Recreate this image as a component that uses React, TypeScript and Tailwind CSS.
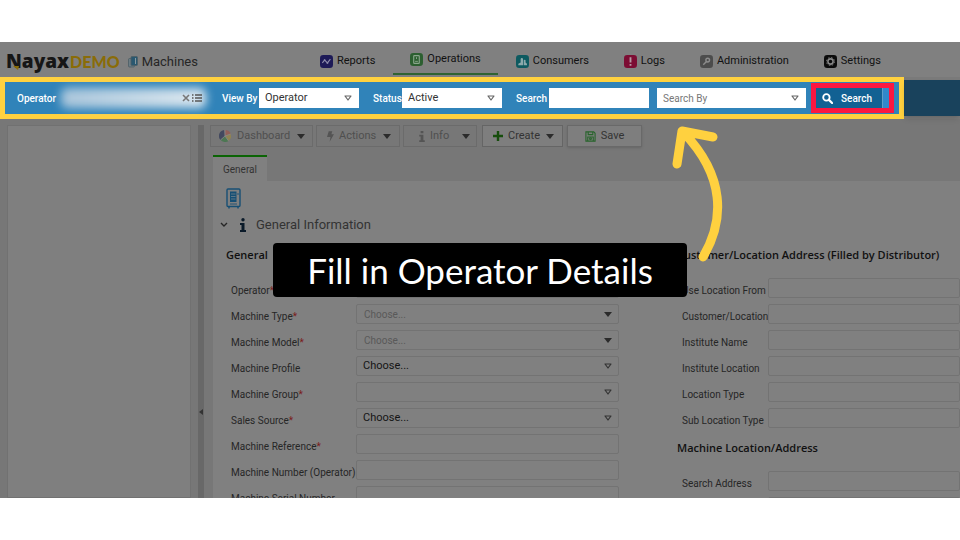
import React from 'react';

interface NavItem {
  label: string;
  icon: React.ReactNode;
  active?: boolean;
}

interface Field {
  id: string;
  label: string;
  required?: boolean;
  kind: 'text' | 'select';
  value?: string;
  disabled?: boolean;
}

const navItems: NavItem[] = [
  {
    label: 'Reports',
    icon: (
      <svg viewBox="0 0 14 14" className="size-[13px]">
        <rect width="14" height="14" rx="3.5" fill="#1d1a57" />
        <path d="M2.5 8.5 5 5.5l3 3 3.200-4" fill="none" stroke="#8d8cab" strokeWidth="1.2" />
        <circle cx="5" cy="5.500" r="1" fill="#8d8cab" />
        <circle cx="8" cy="8.500" r="1" fill="#8d8cab" />
      </svg>
    ),
  },
  {
    label: 'Operations',
    active: true,
    icon: (
      <svg viewBox="0 0 14 14" className="size-[13px]">
        <rect width="14" height="14" rx="3.5" fill="#2c5f30" />
        <rect x="4" y="2.8" width="6" height="8.400" rx="0.800" fill="none" stroke="#8aa68c" strokeWidth="1.2" />
        <path d="M5.500 9h3M7 4.500v2" stroke="#8aa68c" strokeWidth="1" />
      </svg>
    ),
  },
  {
    label: 'Consumers',
    icon: (
      <svg viewBox="0 0 14 14" className="size-[13px]">
        <rect width="14" height="14" rx="3.5" fill="#0d5a60" />
        <path d="M2.500 11V9.500L5 8V4.500a1.300 1.300 0 0 1 2.600 0V11z" fill="#8ba9ab" />
        <path d="M8.300 11V6a1 1 0 0 1 2 0v2l1.500 1.500V11z" fill="#8ba9ab" />
      </svg>
    ),
  },
  {
    label: 'Logs',
    icon: (
      <svg viewBox="0 0 14 14" className="size-[13px]">
        <rect width="14" height="14" rx="3.5" fill="#7c0d33" />
        <path d="M7 2.500v5.500M7 9.600v2" stroke="#b598a2" strokeWidth="2" />
      </svg>
    ),
  },
  {
    label: 'Administration',
    icon: (
      <svg viewBox="0 0 14 14" className="size-[13px]">
        <rect width="14" height="14" rx="3.5" fill="#4c4c4c" />
        <circle cx="8.300" cy="5.500" r="2" fill="none" stroke="#8c8c8c" strokeWidth="1.500" />
        <path d="M7 7 3.500 10.500" stroke="#8c8c8c" strokeWidth="1.600" />
      </svg>
    ),
  },
  {
    label: 'Settings',
    icon: (
      <svg viewBox="0 0 14 14" className="size-[13px]">
        <rect width="14" height="14" rx="3.5" fill="#0b0b0b" />
        <circle cx="7" cy="7" r="2.800" fill="none" stroke="#858585" strokeWidth="1.700" />
        <circle cx="7" cy="7" r="4.300" fill="none" stroke="#858585" strokeWidth="1" strokeDasharray="1.700 1.677" />
      </svg>
    ),
  },
];

const machineFields: Field[] = [
  { id: 'operator', label: 'Operator', required: true, kind: 'text' },
  { id: 'machine-type', label: 'Machine Type', required: true, kind: 'select', value: 'Choose...', disabled: true },
  { id: 'machine-model', label: 'Machine Model', required: true, kind: 'select', value: 'Choose...', disabled: true },
  { id: 'machine-profile', label: 'Machine Profile', kind: 'select', value: 'Choose...' },
  { id: 'machine-group', label: 'Machine Group', required: true, kind: 'select', value: '' },
  { id: 'sales-source', label: 'Sales Source', required: true, kind: 'select', value: 'Choose...' },
  { id: 'machine-reference', label: 'Machine Reference', required: true, kind: 'text' },
  { id: 'machine-number', label: 'Machine Number (Operator)', kind: 'text' },
  { id: 'machine-serial', label: 'Machine Serial Number', kind: 'text' },
];

const customerFields: Field[] = [
  { id: 'use-location', label: 'Use Location From', kind: 'text' },
  { id: 'customer-location', label: 'Customer/Location', kind: 'text' },
  { id: 'institute-name', label: 'Institute Name', kind: 'text' },
  { id: 'institute-location', label: 'Institute Location', kind: 'text' },
  { id: 'location-type', label: 'Location Type', kind: 'text' },
  { id: 'sub-location-type', label: 'Sub Location Type', kind: 'text' },
];

const addressFields: Field[] = [
  { id: 'search-address', label: 'Search Address', kind: 'text' },
  { id: 'country', label: '', kind: 'text' },
];

const SolidCaret: React.FC = () => (
  <svg viewBox="0 0 8 5" className="h-[5px] w-2 shrink-0">
    <path d="M0 0h8L4 5z" fill="#2b2b2b" />
  </svg>
);

const OpenCaret: React.FC = () => (
  <svg viewBox="0 0 8 6" className="h-[6px] w-2 shrink-0">
    <path d="M1 1h6L4 5z" fill="none" stroke="currentColor" strokeWidth="1.200" strokeLinejoin="round" />
  </svg>
);

const FieldRow: React.FC<{ field: Field }> = ({ field }) => (
  <>
    <label htmlFor={field.id} className="pt-[6px] pl-[5px] leading-[14px] whitespace-nowrap text-[#262626]">
      {field.label}
      {field.required && <span className="text-[#7a1c1c]">*</span>}
    </label>
    {field.kind === 'text' ? (
      <input id={field.id} className="h-5 w-full rounded-xs border border-[#737373] bg-transparent px-2" />
    ) : (
      <div className="relative h-5">
        <select
          id={field.id}
          disabled={field.disabled}
          className={`h-5 w-full appearance-none rounded-xs border border-[#737373] bg-transparent opacity-100 ${
            field.disabled ? 'px-[7px] text-[#595959]' : 'px-[6px] text-[11px] text-[#151515]'
          }`}
        >
          <option>{field.value}</option>
        </select>
        <span className="pointer-events-none absolute inset-y-0 right-[7px] flex items-center text-[#333333]">
          {field.disabled ? <SolidCaret /> : <OpenCaret />}
        </span>
      </div>
    )}
  </>
);

const SectionTitle: React.FC<{ children: React.ReactNode }> = ({ children }) => (
  <h3 className="mt-[10px] mb-[13px] font-['Open_Sans'] text-[11px] leading-5 font-semibold whitespace-nowrap text-[#111111]">
    {children}
  </h3>
);

const FilterSelect: React.FC<{ id: string; value: string; className: string }> = ({ id, value, className }) => (
  <div className={`relative h-5 bg-white ${className}`}>
    <select id={id} className="h-5 w-full appearance-none px-[6px]">
      <option>{value}</option>
    </select>
    <span className="pointer-events-none absolute inset-y-0 right-[7px] flex items-center text-[#666666]">
      <OpenCaret />
    </span>
  </div>
);

const Header: React.FC = () => (
  <header className="flex h-[35px] items-stretch bg-[#808080] text-[11px] text-[#111111]">
    <div className="flex w-[303px] shrink-0 items-center pt-1 pl-[6px]">
      <div className="relative flex items-baseline">
        <span className="font-['Open_Sans'] text-[19px] leading-5 font-extrabold text-[#161616]">Nayax</span>
        <span className="ml-px font-[Lato] text-[16px] leading-5 font-black text-[#8a6c08]">DEMO</span>
        <svg viewBox="0 0 6 4" className="absolute bottom-[2px] left-[7px] h-1 w-[6px]">
          <path d="M0 0h6L5 4z" fill="#8a6c08" />
        </svg>
      </div>
      <svg viewBox="0 0 10 12" className="mr-1 ml-2 h-3 w-[10px]">
        <rect x="0.500" y="2.500" width="6" height="8.500" rx="1" fill="#6c7c83" stroke="#465962" strokeWidth="0.700" />
        <rect x="3" y="0.500" width="6.500" height="9" rx="1" fill="#2a5870" stroke="#4e5e65" strokeWidth="0.800" />
        <path d="M7.500 2v6" stroke="#8899a0" strokeWidth="1" />
      </svg>
      <h1 className="text-[13px] text-[#262626]">Machines</h1>
    </div>
    <nav className="flex gap-px">
      {navItems.map((item) => (
        <a
          key={item.label}
          href="#"
          className={`flex items-center gap-1 px-[17px] ${
            item.active ? 'mb-[2px] border-b-2 border-[#2f6332] pt-[3px]' : 'pt-1'
          }`}
        >
          {item.icon}
          {item.label}
        </a>
      ))}
    </nav>
  </header>
);

const FilterBar: React.FC = () => (
  <div className="flex items-center bg-[#7a7a7a]">
    <form className="flex h-[42px] shrink-0 items-center border-[5px] border-[#ffd13f] bg-[#3083b9] pl-3 text-[11px] text-[#333333]">
      <label htmlFor="filter-operator" className="w-10 text-[10px] font-medium text-white">Operator</label>
      <div className="relative mr-3 flex h-5 w-[153px] items-center justify-end gap-[2px] pr-2">
        <div className="absolute inset-x-1 inset-y-0 rounded-md bg-linear-to-r from-[#aac6db] to-[#dde8f0] blur-[5px]" />
        <input id="filter-operator" className="relative h-5 w-full min-w-0 bg-transparent" />
        <svg viewBox="0 0 8 8" className="relative size-2 shrink-0">
          <path d="M1 1l6 6M7 1 1 7" stroke="#777777" strokeWidth="1.600" />
        </svg>
        <svg viewBox="0 0 10 8" className="relative h-2 w-[10px] shrink-0">
          <path d="M3 1h7M3 4h7M3 7h7M0 1h1.500M0 4h1.500M0 7h1.500" stroke="#555555" strokeWidth="1.300" />
        </svg>
      </div>
      <label htmlFor="filter-view" className="w-[37px] text-[10px] font-medium whitespace-nowrap text-white">View By</label>
      <FilterSelect id="filter-view" value="Operator" className="w-[100px]" />
      <label htmlFor="filter-status" className="ml-[14px] w-[29px] text-[10px] font-medium text-white">Status</label>
      <FilterSelect id="filter-status" value="Active" className="w-[100px]" />
      <label htmlFor="filter-search" className="ml-[14px] w-[33px] text-[10px] font-medium text-white">Search</label>
      <input id="filter-search" className="h-5 w-[100px] bg-white px-[6px]" />
      <FilterSelect id="filter-search-by" value="Search By" className="ml-2 w-[149px] text-[10px] text-[#777777]" />
      <div className="mr-[5px] ml-[5px] flex h-[30px] border-[5px] border-[#fb1741] bg-[#3088cb]">
        <button type="button" className="mr-[6px] flex w-[67px] items-center gap-2 border-r border-[#5d9fc9] bg-[#126193] pl-[6px] text-[10px] font-medium text-white">
          <svg viewBox="0 0 12 12" className="size-[11px]">
            <circle cx="4.800" cy="4.800" r="3.500" fill="none" stroke="white" strokeWidth="2" />
            <path d="M7.500 7.500 11 11" stroke="white" strokeWidth="2.400" strokeLinecap="round" />
          </svg>
          Search
        </button>
      </div>
    </form>
    <div className="h-9 flex-1 bg-[#19425c] shadow-md" />
  </div>
);

const Toolbar: React.FC = () => (
  <div className="flex h-[22px] text-[11px] text-[#4f4f4f]">
    <button type="button" className="mr-[3px] flex w-[103px] items-center border border-[#6b6b6b] pr-[7px] pl-2">
      <svg viewBox="0 0 12 12" className="mr-[6px] size-3">
        <path d="M6 6V0a6 6 0 0 1 5.700 4z" fill="#925f58" />
        <path d="M6 6l5.700-2A6 6 0 0 1 9.500 10.900z" fill="#8f8352" />
        <path d="M6 6l3.500 4.900A6 6 0 0 1 1.500 10z" fill="#4d7753" />
        <path d="M6 6l-4.500 4A6 6 0 0 1 5.200 0z" fill="#43495f" />
        <path d="M6 6V0M6 6l5.700-2M6 6l3.500 4.900M6 6l-4.500 4" stroke="#888888" strokeWidth="0.800" />
      </svg>
      <span className="mr-auto">Dashboard</span>
      <SolidCaret />
    </button>
    <button type="button" className="mr-[3px] flex w-[84px] items-center border border-[#6b6b6b] pr-2 pl-[10px]">
      <svg viewBox="0 0 8 12" className="mr-[5px] h-[11px] w-[7px]">
        <path d="M2 0h4L5 3.500h3L3 12l1-5.500H0z" fill="#545454" />
      </svg>
      <span className="mr-auto">Actions</span>
      <SolidCaret />
    </button>
    <button type="button" className="mr-[5px] flex w-[74px] items-center border border-[#6b6b6b] pr-[6px] pl-[15px]">
      <svg viewBox="0 0 6 12" className="mr-[5px] h-[11px] w-[6px]">
        <path d="M1.500 0h3v2.500h-3zM0 4h4.500v6H6v2H0v-2h1.500V6H0z" fill="#545454" />
      </svg>
      <span className="mr-auto">Info</span>
      <SolidCaret />
    </button>
    <button type="button" className="mr-1 flex w-[81px] items-center border border-[#656565] bg-[#7e7e7e] pr-2 pl-[10px] text-[#333333]">
      <svg viewBox="0 0 10 10" className="mr-[5px] size-[10px]">
        <path d="M5 0v10M0 5h10" stroke="#164d0c" strokeWidth="2.400" />
      </svg>
      <span className="mr-auto">Create</span>
      <SolidCaret />
    </button>
    <button type="button" className="flex w-[75px] items-center justify-center gap-[5px] border border-[#696969] bg-[#7e7e7e] text-[#333333] shadow-sm">
      <svg viewBox="0 0 12 12" className="size-[11px]" fill="none" stroke="#27642b" strokeWidth="1.200">
        <path d="M1 1h8.500L11 2.500V11H1z" />
        <path d="M3.500 1v3h5V1M3 11V6.500h6V11" />
        <circle cx="6" cy="8.500" r="1" />
      </svg>
      Save
    </button>
  </div>
);

const App: React.FC = () => (
  <div className="h-screen bg-white py-[42px] font-[Roboto,sans-serif]">
    <main className="relative flex h-full flex-col overflow-hidden bg-[#777777]">
      <Header />
      <FilterBar />

      <div className="flex min-h-0 flex-1 pt-[6px]">
        <aside className="mr-[7px] ml-[7px] w-[184px] shrink-0 border border-[#717171] bg-[#7f7f7f]" />
        <div className="flex w-[6px] shrink-0 items-center justify-center bg-[#686868]">
          <svg viewBox="0 0 4 6" className="mb-[-200px] h-[6px] w-1">
            <path d="M4 0v6L0 3z" fill="#333333" />
          </svg>
        </div>

        <div className="min-w-0 flex-1 pl-[6px]">
          <Toolbar />
          <div className="mt-2 ml-[3px]">
            <button type="button" className="block h-[26px] w-[54px] border-t-2 border-[#0b6405] bg-[#808080] text-[10px] text-[#333333]">
              General
            </button>
            <section className="h-screen bg-[#808080] pt-[7px] pl-[13px] text-[10px]">
              <svg viewBox="0 0 15 21" className="h-[21px] w-[15px]" fill="none" stroke="#174f74">
                <rect x="1" y="1" width="13" height="17.500" rx="1" strokeWidth="1.400" />
                <path d="M3 18.500v2M12 18.500v2" strokeWidth="1.500" />
                <rect x="4" y="3.500" width="6.500" height="10.500" fill="#174f74" stroke="none" />
                <path d="M5 6h4.500M5 8.500h4.500M5 11h4.500" stroke="#71818b" strokeWidth="0.800" />
                <path d="M4 16h7M12 5v2" strokeWidth="0.900" />
              </svg>
              <h2 className="mt-[6px] flex h-5 items-center text-[13px] text-[#333333]">
                <svg viewBox="0 0 8 6" className="mr-3 -ml-[6px] h-[6px] w-2">
                  <path d="M1 1l3 3 3-3" fill="none" stroke="#262626" strokeWidth="1.400" />
                </svg>
                <svg viewBox="0 0 6 14" className="mr-[10px] h-[14px] w-[6px]">
                  <circle cx="3" cy="1.700" r="1.700" fill="#0a1a29" />
                  <path d="M0 5h4.500v7H6v2H0v-2h1.500V7H0z" fill="#0a1a29" />
                </svg>
                General Information
              </h2>

              <div className="grid grid-cols-[393px_minmax(0,1fr)] gap-x-[58px]">
                <div>
                  <SectionTitle>General</SectionTitle>
                  <div className="grid grid-cols-[130px_minmax(0,1fr)] gap-y-[6px]">
                    {machineFields.map((field) => (
                      <FieldRow key={field.id} field={field} />
                    ))}
                  </div>
                </div>
                <div>
                  <SectionTitle>Customer/Location Address (Filled by Distributor)</SectionTitle>
                  <div className="grid grid-cols-[91px_minmax(0,1fr)] gap-y-[6px]">
                    {customerFields.map((field) => (
                      <FieldRow key={field.id} field={field} />
                    ))}
                  </div>
                  <SectionTitle>Machine Location/Address</SectionTitle>
                  <div className="grid grid-cols-[91px_minmax(0,1fr)] gap-y-[6px]">
                    {addressFields.map((field) => (
                      <FieldRow key={field.id} field={field} />
                    ))}
                  </div>
                </div>
              </div>
            </section>
          </div>
        </div>
      </div>

      {/* tutorial callout on top of the page */}
      <div className="pointer-events-none absolute inset-x-0 top-[201px] flex justify-center">
        <p className="rounded-sm bg-black px-[34px] font-[Lato] text-[35px] leading-[54px] text-white">
          Fill in Operator Details
        </p>
      </div>
      <svg viewBox="0 0 60 150" className="pointer-events-none absolute top-[78px] left-[670px] h-[150px] w-[60px]">
        <path
          d="M33 137C55 100 55 56 14 13M7 44 12 11 43 17"
          fill="none"
          stroke="#ffd13f"
          strokeWidth="9"
          strokeLinecap="round"
          strokeLinejoin="round"
        />
      </svg>
    </main>
  </div>
);

export default App;
